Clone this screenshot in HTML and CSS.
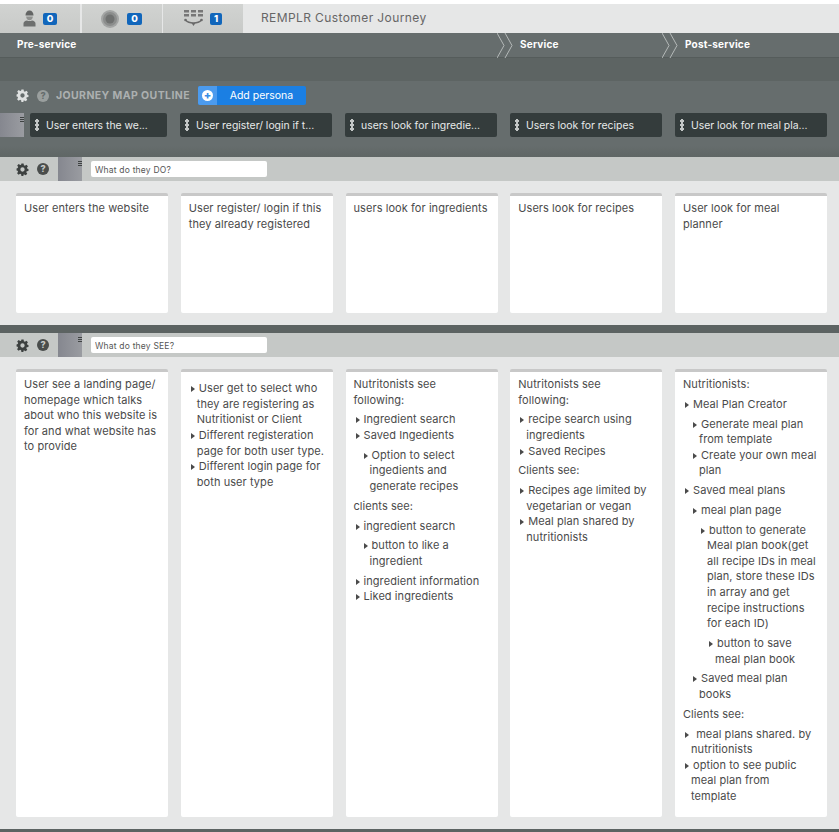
FILE: index.html
```html
<!DOCTYPE html>
<html lang="en">
<head>
<meta charset="UTF-8" />
<meta name="viewport" content="width=device-width, initial-scale=1.0">
<title>REMPLR Customer Journey</title>
<link rel="stylesheet" href="styles.css">
</head>
<body>

<!-- TOP BAR -->
<header class="topbar">
  <div class="tab tab-personas">
    <svg class="tab-icon" width="13" height="17" viewBox="0 0 13 17"><path fill="#636564" d="M2.500 5.500C2.500 2.500 4 .5 6.500.5s4 2 4 5z"/><path fill="#8f918f" d="M3.200 6.500h6.600c0 2.200-1.300 3.800-3.300 3.800S3.200 8.700 3.200 6.500z"/><path fill="#6d6f6e" d="M.5 16.500v-3c0-1.700 1.700-2.700 3.500-3 1.500.8 3.500.8 5 0 1.800.3 3.500 1.300 3.500 3v3z"/></svg>
    <span class="badge">0</span>
  </div>
  <div class="tab tab-touch">
    <svg class="tab-icon" width="18" height="18" viewBox="0 0 18 18"><circle cx="9" cy="9" r="9" fill="#a3a5a4"/><circle cx="9" cy="9" r="7" fill="#8b8d8c"/><circle cx="9" cy="9" r="4.500" fill="#6f7170"/></svg>
    <span class="badge badge-wide">0</span>
  </div>
  <div class="tab tab-stages">
    <svg class="tab-icon" width="19" height="17" viewBox="0 0 19 17"><path fill="#777" d="M0 0h5v2.500H0zM7 0h5v2.500H7zM14 0h5v2.500h-5zM0 4h5v2.500H0zM7 4h5v2.500H7zM14 4h5v2.500h-5z"/><path fill="none" stroke="#6a6a6a" stroke-width="1.300" d="M1.500 10c2 2.300 5 3 8 3s6-.7 8-3"/><circle cx="1.500" cy="10" r="1.300" fill="#6a6a6a"/><circle cx="17.500" cy="10" r="1.300" fill="#6a6a6a"/><path fill="#6a6a6a" d="M7.500 13h4l-2 3z"/></svg>
    <span class="badge badge-narrow">1</span>
  </div>
  <h1 class="map-title">REMPLR Customer Journey</h1>
</header>

<!-- FASES -->
<div class="phases">
  <div class="phase phase-pre">Pre-service</div>
  <div class="phase">
    <svg class="chevrons" width="16" height="25" viewBox="0 0 16 25"><path fill="none" stroke="#b4b9b8" d="M0 0l7 12.500L0 25M8 0l7 12.500L8 25"/></svg>
    <span>Service</span>
  </div>
  <div class="phase">
    <svg class="chevrons" width="16" height="25" viewBox="0 0 16 25"><path fill="none" stroke="#b4b9b8" d="M0 0l7 12.500L0 25M8 0l7 12.500L8 25"/></svg>
    <span>Post-service</span>
  </div>
</div>
<div class="spacer-band"></div>

<!-- OUTLINE -->
<section class="outline">
  <div class="outline-head">
    <svg class="icon gear gear-light" viewBox="0 0 24 24"><use href="#gear"/></svg>
    <span class="help help-dim">?</span>
    <h2 class="outline-title">JOURNEY MAP OUTLINE</h2>
    <button class="add-persona"><span class="add-icon"><span class="plus">+</span></span><span class="add-label">Add persona</span></button>
  </div>
  <div class="outline-row">
    <div class="thumb thumb-outline"><span class="thumb-grip"></span></div>
    <div class="pills">
      <div class="pill pill-short"><span class="dots"></span>User enters the we...</div>
      <div class="pill"><span class="dots"></span>User register/ login if t...</div>
      <div class="pill"><span class="dots"></span>users look for ingredie...</div>
      <div class="pill"><span class="dots"></span>Users look for recipes</div>
      <div class="pill"><span class="dots"></span>User look for meal pla...</div>
    </div>
  </div>
</section>

<!-- DO -->
<div class="lane-bar">
  <svg class="icon gear" viewBox="0 0 24 24"><use href="#gear"/></svg>
  <span class="help">?</span>
  <div class="thumb"><span class="thumb-grip"></span></div>
  <input class="lane-input" type="text" value="What do they DO?">
</div>
<section class="lane lane-do">
  <div class="card"><p>User enters the website</p></div>
  <div class="card"><p>User register/ login if this they already registered</p></div>
  <div class="card"><p>users look for ingredients</p></div>
  <div class="card"><p>Users look for recipes</p></div>
  <div class="card"><p>User look for meal planner</p></div>
</section>

<div class="divider"></div>

<!-- SEE -->
<div class="lane-bar">
  <svg class="icon gear" viewBox="0 0 24 24"><use href="#gear"/></svg>
  <span class="help">?</span>
  <div class="thumb"><span class="thumb-grip"></span></div>
  <input class="lane-input" type="text" value="What do they SEE?">
</div>
<section class="lane lane-see">
  <div class="card">
    <p>User see a landing page/ homepage which talks about who this website is for and what website has to provide</p>
  </div>
  <div class="card">
    <ul>
      <li>User get to select who they are registering as Nutritionist or Client</li>
      <li>Different registeration page for both user type.</li>
      <li>Different login page for both user type</li>
    </ul>
  </div>
  <div class="card">
    <p>Nutritonists see following:</p>
    <ul>
      <li>Ingredient search</li>
      <li>Saved Ingedients
        <ul><li>Option to select ingedients and generate recipes</li></ul>
      </li>
    </ul>
    <p>clients see:</p>
    <ul>
      <li>ingredient search
        <ul><li>button to like a ingredient</li></ul>
      </li>
      <li>ingredient information</li>
      <li>Liked ingredients</li>
    </ul>
  </div>
  <div class="card">
    <p>Nutritonists see following:</p>
    <ul>
      <li>recipe search using ingredients</li>
      <li>Saved Recipes</li>
    </ul>
    <p>Clients see:</p>
    <ul>
      <li>Recipes age limited by vegetarian or vegan</li>
      <li>Meal plan shared by nutritionists</li>
    </ul>
  </div>
  <div class="card">
    <p>Nutritionists:</p>
    <ul>
      <li>Meal Plan Creator
        <ul>
          <li>Generate meal plan from template</li>
          <li>Create your own meal plan</li>
        </ul>
      </li>
      <li>Saved meal plans
        <ul>
          <li>meal plan page
            <ul>
              <li>button to generate Meal plan book(get all recipe IDs in meal plan, store these IDs in array and get recipe instructions for each ID)
                <ul><li>button to save meal plan book</li></ul>
              </li>
            </ul>
          </li>
          <li>Saved meal plan books</li>
        </ul>
      </li>
    </ul>
    <p>Clients see:</p>
    <ul>
      <li>&nbsp;meal plans shared. by nutritionists</li>
      <li>option to see public meal plan from<br>template</li>
    </ul>
  </div>
</section>

<div class="divider"></div>

<!-- icono engranaje compartido -->
<svg class="defs" width="0" height="0">
  <symbol id="gear" viewBox="0 0 24 24">
    <path fill-rule="evenodd" d="M10 1h4l.6 3.200 1.900.8 2.700-1.800 2.800 2.800-1.800 2.700.8 1.900L23 11.200v3.600l-3.200.6-.8 1.900 1.800 2.700-2.800 2.800-2.700-1.800-1.900.8L14 24h-4l-.6-3.200-1.900-.8-2.700 1.800L2 19l1.800-2.700-.8-1.900L1 14v-4l2.200-.6.800-1.900L2.200 4.800 5 2l2.700 1.800L9.400 3zM12 8a4 4 0 1 0 0 8 4 4 0 0 0 0-8z"/>
  </symbol>
</svg>
</body>
</html>
```

FILE: styles.css
```css
:root{
  --slate:#666d6d;
  --slate-dark:#5d6463;
  --pill:#343c3c;
  --bar:#c5c8c6;
  --page:#e6e7e7;
  --text:#4a4a4a;
  --blue:#1b7fe3;
}
*,*::before,*::after{box-sizing:border-box;margin:0;padding:0}
body{
  background:var(--page);
  font-family:Inter,'Liberation Sans',sans-serif;
  color:var(--text);
  overflow:hidden;
}

/* TOP BAR */
.topbar{
  display:flex;align-items:stretch;
  height:33px;
  border-top:4px solid #fff;
}
.tab{
  display:flex;align-items:center;
  background:linear-gradient(#d1d3d1,#c8cac8);
}
.tab-personas{width:82px;padding-left:23px;gap:7px;border-right:2px solid #e6e7e7}
.tab-touch{width:81px;padding-left:19px;gap:8px;border-right:1px solid #e6e7e7}
.tab-stages{width:80px;padding-left:21px;gap:7px}
.tab-icon{flex:none}
.badge{
  width:14px;height:12px;
  background:#1166bb;color:#fff;
  border-radius:2px;
  font-size:9.500px;font-weight:800;line-height:12px;text-align:center;
}
.badge-wide{width:15px}
.badge-narrow{width:12px}
.map-title{
  margin-left:18px;
  align-self:center;
  padding-bottom:2px;
  font-size:12px;font-weight:400;letter-spacing:.4px;
  color:#666;
}

/* PHASES */
.phases{
  display:grid;grid-template-columns:497px 165px 1fr;
  height:25px;
  background:var(--slate);
  border-bottom:1px solid #555c5b;
}
.phase{
  display:flex;align-items:center;gap:7px;
  font-size:10px;font-weight:700;letter-spacing:.2px;color:#fff;
}
.phase span,.phase-pre{padding-bottom:3px}
.phase-pre{padding-left:17px}
.chevrons{flex:none}
.spacer-band{height:23px;background:var(--slate-dark)}

/* OUTLINE */
.outline{
  height:76px;
  background:linear-gradient(var(--slate) 85%,#5f6665);
  padding-top:5px;
}
.outline-head{
  display:flex;align-items:center;
  height:19px;
  padding-left:16px;
}
.icon{width:13px;height:13px;flex:none}
.gear{fill:#3d4140}
.gear-light{fill:#dfe1e1}
.help{
  width:12px;height:12px;margin-left:8px;flex:none;
  border-radius:50%;background:#4a4d4c;color:#c5c8c6;
  font-size:9px;font-weight:800;line-height:12px;text-align:center;
}
.help-dim{background:#9a9f9e;color:var(--slate)}
.outline-title{
  margin-left:7px;
  font-size:10.500px;font-weight:700;letter-spacing:.4px;
  color:#acb0b0;
  white-space:nowrap;
}
.add-persona{
  display:flex;align-items:center;
  width:108px;height:19px;margin-left:8px;
  border:0;border-radius:2px;overflow:hidden;
  background:var(--blue);color:#fff;
  font-family:inherit;font-size:10.500px;
}
.add-icon{
  width:19px;height:19px;flex:none;
  display:flex;align-items:center;justify-content:center;
  background:#4c9bee;
}
.plus{
  width:11px;height:11px;border-radius:50%;
  background:#fff;color:#3a8de4;
  font-size:11px;font-weight:800;line-height:11px;text-align:center;
}
.add-label{flex:1;text-align:center}
.outline-row{display:flex;gap:6px;margin-top:8px}
.thumb{
  position:relative;
  width:24px;height:24px;flex:none;
  background:linear-gradient(90deg,#85878f,#9a9ca1);
}
.thumb-grip{
  position:absolute;top:4px;right:0;
  width:4px;height:5px;
  background:repeating-linear-gradient(#3f4342 0 1px,transparent 1px 2px);
}
.pills{display:flex;gap:13px}
.pill{
  display:flex;align-items:center;
  width:152px;height:24px;
  padding-left:5px;
  background:var(--pill);border-radius:2px;
  font-size:10.400px;color:#e8eaea;
  white-space:nowrap;
}
.pill-short{width:137px}
.dots{
  width:4px;height:12px;margin-right:7px;flex:none;
  background:radial-gradient(circle at 2px 2px,#c3c7c6 1.800px,transparent 2px) 0 0/4px 4px repeat-y;
}

/* LANES */
.lane-bar{
  display:flex;align-items:center;
  height:24px;
  padding-left:16px;
  background:var(--bar);
}
.lane-bar .thumb{margin-left:9px}
.lane-input{
  width:176px;height:16px;margin-left:9px;
  padding:1px 0 0 4px;
  border:0;border-radius:2px;background:#fff;
  font-family:inherit;font-size:8.500px;letter-spacing:.2px;color:#555;
}
.lane{
  display:grid;grid-template-columns:repeat(5,152px);column-gap:12.750px;
  padding:12px 0 12px 16px;
}
.lane-do{height:144px}
.lane-see{height:472px}
.divider{height:8px;background:#5c6362}

/* CARDS */
.card{
  background:#fff;
  border-top:3px solid #c8c8c8;
  border-radius:2px;
  padding:5px 8px;
  font-size:11px;line-height:15.600px;letter-spacing:.07px;
}
.card p{margin-bottom:4.200px}
.card ul{list-style:none;margin:4.200px 0}
.card li{padding-left:8px}
.card li::before{
  content:"";display:inline-block;
  margin:0 4px 0 -6px;
  border-left:4px solid #4a4a4a;
  border-top:3px solid transparent;
  border-bottom:3px solid transparent;
}
```
